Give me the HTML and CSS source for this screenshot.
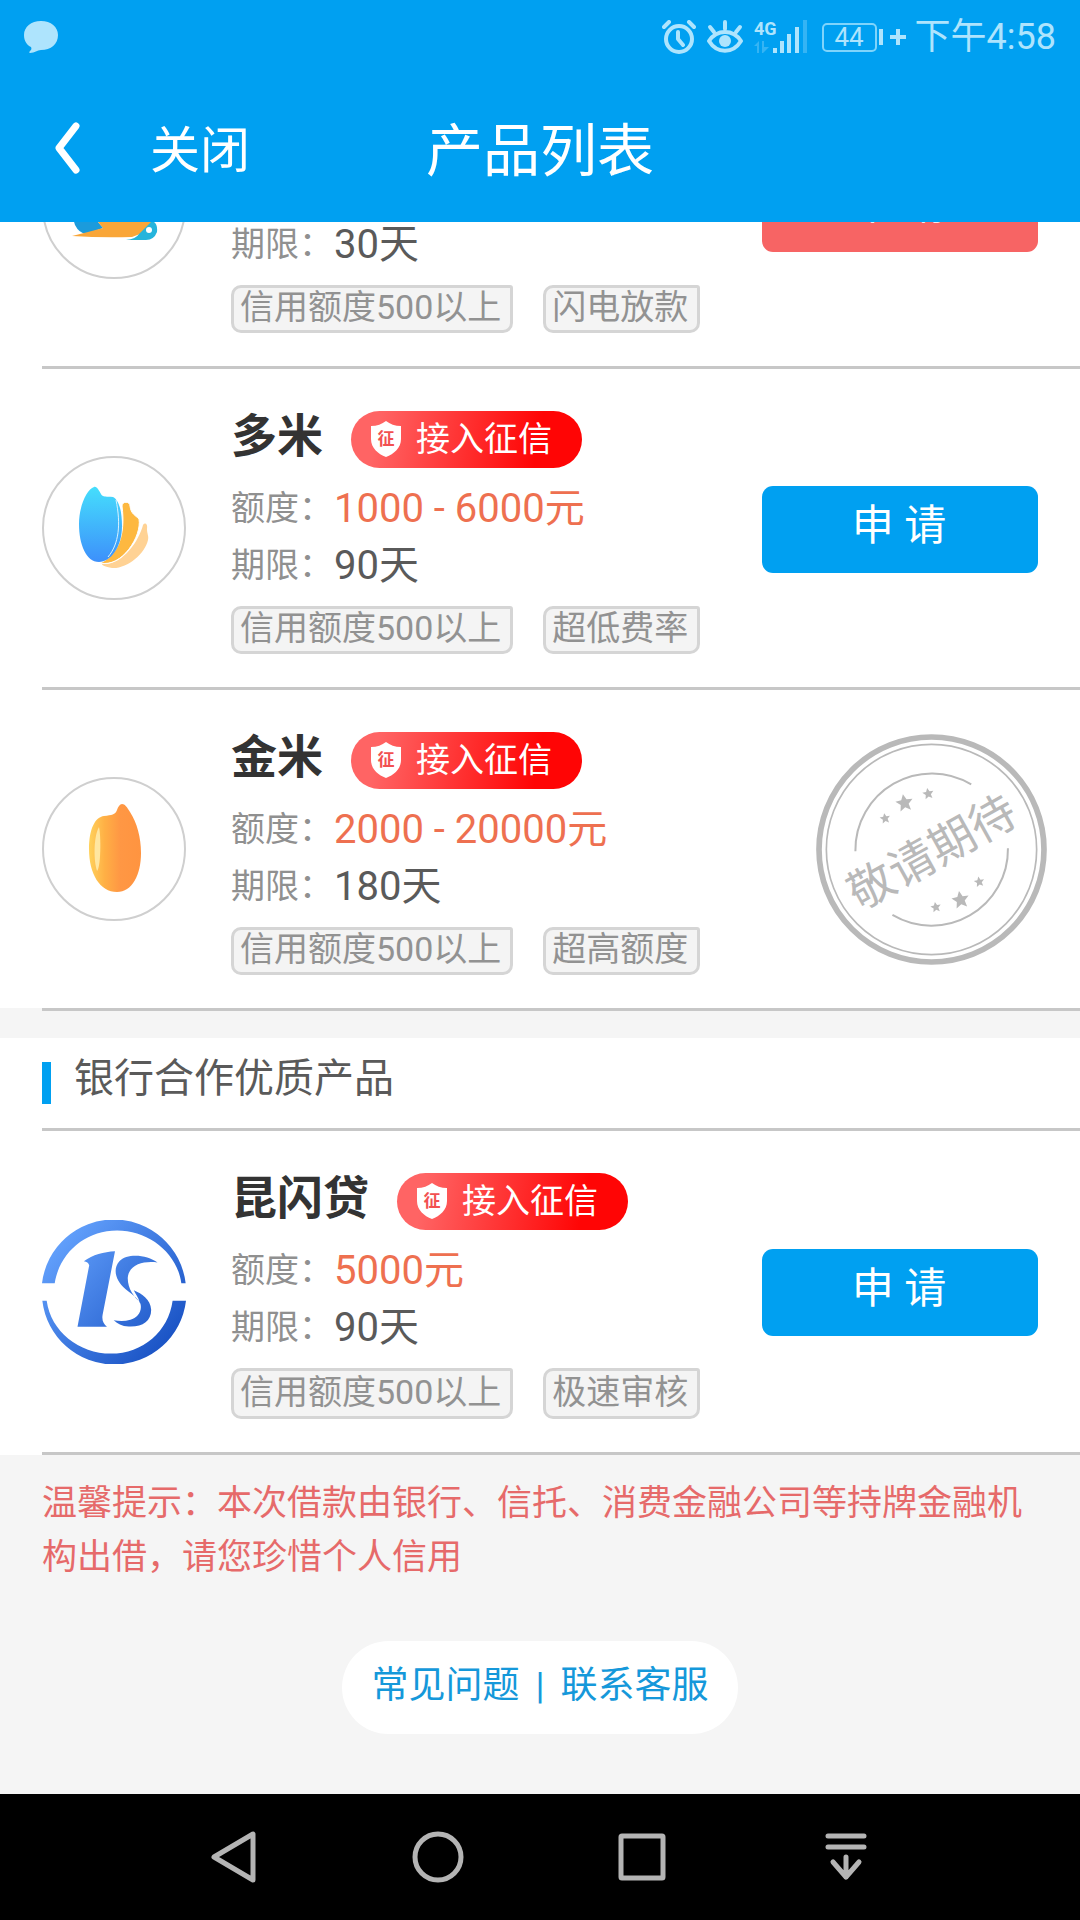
FILE: index.html
```html
<!DOCTYPE html>
<html lang="zh-CN">
<head>
<meta charset="utf-8">
<meta name="viewport" content="width=device-width, initial-scale=1">
<title>产品列表</title>
<link rel="stylesheet" href="styles.css">
</head>
<body>
<svg class="defs" aria-hidden="true">
  <defs>
    <linearGradient id="rice-blue" x1="0" y1="0" x2="0" y2="1"><stop offset="0" stop-color="#45defc"/><stop offset="1" stop-color="#3d90fb"/></linearGradient>
    <linearGradient id="rice-gold"><stop offset="0" stop-color="#ffd25c"/><stop offset=".3" stop-color="#ffb045"/><stop offset=".6" stop-color="#ff9744"/><stop offset="1" stop-color="#ff9440"/></linearGradient>
    <linearGradient id="bank-blue" gradientUnits="userSpaceOnUse" x1="110" y1="140" x2="430" y2="430"><stop offset="0" stop-color="#619ffb"/><stop offset="1" stop-color="#1c55c6"/></linearGradient>
    <symbol id="shield" viewBox="0 0 30 36">
      <path fill="#fff" d="M15 0C19 3 24 5 30 5V18C30 27 23 33 15 36C7 33 0 27 0 18V5C6 5 11 3 15 0Z"/>
      <text x="15" y="24" text-anchor="middle" class="shield-text">征</text>
    </symbol>
    <path id="star" d="M0 -27L8 -10L26 -9L12 4L16 23L0 13L-16 23L-12 4L-26 -9L-8 -10Z"/>
  </defs>
</svg>

<div class="screen">
  <header class="header">
    <div class="status">
      <svg class="status-chat" width="34" height="33" viewBox="0 0 34 33"><path d="M17 0C27 0 34 6 34 14C34 23 27 29 17 29C13 29 11 32 6 32C5 32 5 31 6 30C7 29 8 28 7 26C3 24 0 20 0 14C0 6 7 0 17 0Z"/></svg>
      <div class="status-right">
        <svg width="34" height="34" viewBox="0 0 34 34" class="line"><circle cx="17" cy="19" r="13" stroke-width="4"/><path stroke-width="4" d="M16 12V19L21 25M2 7L7 2M27 2L32 7"/></svg>
        <svg class="icon-eye line" width="36" height="34" viewBox="0 0 36 34"><path stroke-width="4" d="M2 21C10 9 26 9 34 21C26 34 10 34 2 21Z"/><circle class="solid" cx="18" cy="21" r="6"/><path stroke-width="4" d="M18 2V9M3 7L7 12M33 7L29 12"/></svg>
        <svg class="icon-signal" width="54" height="40" viewBox="0 -2 54 40"><text x="0" y="16" class="net">4G</text><path d="M19 29h4v5h-4zM26 22h4v12h-4zM33 15h4v19h-4zM41 8h4v26h-4z"/><path opacity=".3" d="M49 1h4v33h-4zM0 27L5 22V34H3V27ZM8 22H10V28H15L9 34H8Z"/></svg>
        <span class="battery">44</span>
        <svg class="icon-charge" width="28" height="18" viewBox="0 0 28 18"><path d="M0 1h4v16H0zM17 1h4v6h6v4h-6v6h-4v-6h-6V7h6z"/></svg>
        <time>下午4:58</time>
      </div>
    </div>
    <div class="titlebar">
      <div class="titlebar-left">
        <button class="plain" type="button" aria-label="返回"><svg class="chevron" width="28" height="52" viewBox="0 0 28 52"><path d="M22 4L5 26L22 48"/></svg></button>
        <button class="plain close" type="button">关闭</button>
      </div>
      <h1>产品列表</h1>
    </div>
  </header>

  <main class="content">
    <section class="list list-scrolled">
      <article class="product">
        <svg class="logo" viewBox="0 0 144 144">
          <circle class="ring" cx="72" cy="72" r="71"/>
          <path fill="#1b9bdc" d="M30 80L33 90Q37 98 44 99L61 93L56 87L58 80Z"/>
          <path fill="#f9a638" d="M30 101L46 97L61 93L56 87V80H112Q108 95 98 99L90 102Q60 103 30 101Z"/>
          <path fill="#25b4dc" d="M84 105Q94 104 97 99L110 86Q116 88 115 97Q112 105 104 105Z"/>
          <circle fill="#fff" cx="107" cy="95" r="3"/>
        </svg>
        <div class="details">
          <dl class="facts"><div><dt>期限：</dt><dd>30天</dd></div></dl>
          <ul class="tags"><li>信用额度500以上</li><li>闪电放款</li></ul>
        </div>
        <button class="apply apply-hot" type="button">申 请</button>
      </article>
      <hr class="rule">
      <article class="product">
        <svg class="logo" viewBox="0 0 144 144">
          <circle class="ring" cx="72" cy="72" r="71"/>
          <path fill="#ffd294" d="M101 69C103 66 106 68 105 73C105 78 107 80 106 84C103 98 85 113 70 112C63 111 60 109 60 108C80 110 97 85 101 69Z"/>
          <path fill="#fdb840" stroke="#fff" d="M80 50C80 45 88 45 88 50C89 58 93 59 97 63C100 80 80 112 58 107C75 100 84 80 80 50Z"/>
          <path fill="url(#rice-blue)" d="M52 31C55 30 57 35 59 38C61 42 66 40 71 41C77 44 80 55 80 70C80 92 68 106 57 106C44 106 37 88 37 68C37 50 45 33 52 31Z"/>
          <path fill="none" stroke="#d9f3ff" d="M74 44C79 68 77 88 66 101"/>
        </svg>
        <div class="details">
          <div class="heading"><h2>多米</h2><span class="badge"><svg class="shield"><use href="#shield"/></svg>接入征信</span></div>
          <dl class="facts"><div><dt>额度：</dt><dd class="amount">1000 - 6000元</dd></div><div><dt>期限：</dt><dd>90天</dd></div></dl>
          <ul class="tags"><li>信用额度500以上</li><li>超低费率</li></ul>
        </div>
        <button class="apply" type="button">申 请</button>
      </article>
      <hr class="rule">
      <article class="product">
        <svg class="logo" viewBox="0 0 144 144">
          <circle class="ring" cx="72" cy="72" r="71"/>
          <path fill="url(#rice-gold)" d="M80 27C83 27 85 30 88 35C95 46 99 60 99 76C99 98 90 115 75 115C58 115 47 97 47 72C47 52 53 40 62 39C70 38 73 38 75 33C76 30 78 27 80 27Z"/>
          <path fill="#ffe6a0" d="M57 50C52 58 51 82 55 94C59 90 59 58 57 50Z"/>
        </svg>
        <div class="details">
          <div class="heading"><h2>金米</h2><span class="badge"><svg class="shield"><use href="#shield"/></svg>接入征信</span></div>
          <dl class="facts"><div><dt>额度：</dt><dd class="amount">2000 - 20000元</dd></div><div><dt>期限：</dt><dd>180天</dd></div></dl>
          <ul class="tags"><li>信用额度500以上</li><li>超高额度</li></ul>
        </div>
        <svg class="stamp" viewBox="78 73 692 692">
          <g class="stamp-lines">
            <circle cx="424" cy="419" r="337" stroke-width="17"/>
            <circle cx="424" cy="419" r="315" stroke-width="5"/>
            <path stroke-width="6" d="M196 424A229 229 0 0 1 543 224M653 415A229 229 0 0 1 307 615"/>
          </g>
          <use href="#star" transform="translate(343 280) rotate(-10)"/>
          <use href="#star" transform="translate(285 326) rotate(-10) scale(.6)"/>
          <use href="#star" transform="translate(414 252) rotate(-10) scale(.65)"/>
          <use href="#star" transform="translate(511 570) rotate(-10)"/>
          <use href="#star" transform="translate(437 592) rotate(-10) scale(.6)"/>
          <use href="#star" transform="translate(567 516) rotate(-10) scale(.6)"/>
          <text class="stamp-text" text-anchor="middle" transform="translate(424 424) rotate(-29)" y="52">敬请期待</text>
        </svg>
      </article>
    </section>
    <hr class="rule">

    <section class="list list-partner">
      <h2 class="section-title"><span>银行合作优质产品</span></h2>
      <hr class="rule">
      <article class="product">
        <svg class="logo" viewBox="66 62 430 430">
          <g fill="url(#bank-blue)">
            <path d="M66 251A216 216 0 0 1 495 251H482C470 160 385 93 290 93C195 93 118 160 104 251Z"/>
            <path d="M496 303A216 216 0 0 1 67 303H80C92 394 177 461 272 461C367 461 444 394 456 303Z"/>
            <path d="M191 185C218 165 250 157 284 155L247 345C244 362 250 373 260 381H172L207 197Q204 186 191 185Z"/>
            <path d="M411 189C380 165 320 160 297 185C275 210 288 245 315 268C335 284 352 295 360 312C366 335 350 355 330 360C312 365 295 364 280 361C290 370 305 379 325 380C365 382 392 365 392 330C390 300 365 282 340 272C346 285 354 294 357 306C342 292 322 268 322 235C325 195 370 183 411 189Z"/>
          </g>
        </svg>
        <div class="details">
          <div class="heading"><h2>昆闪贷</h2><span class="badge"><svg class="shield"><use href="#shield"/></svg>接入征信</span></div>
          <dl class="facts"><div><dt>额度：</dt><dd class="amount">5000元</dd></div><div><dt>期限：</dt><dd>90天</dd></div></dl>
          <ul class="tags"><li>信用额度500以上</li><li>极速审核</li></ul>
        </div>
        <button class="apply" type="button">申 请</button>
      </article>
      <hr class="rule">
    </section>

    <p class="notice">温馨提示：本次借款由银行、信托、消费金融公司等持牌金融机构出借，请您珍惜个人信用</p>
    <nav class="help"><a href="#faq">常见问题</a><span>|</span><a href="#service">联系客服</a></nav>
  </main>

  <nav class="sysbar">
    <button class="plain" type="button" aria-label="返回"><svg viewBox="0 0 60 60"><path d="M49 7V53L10 30Z"/></svg></button>
    <button class="plain" type="button" aria-label="主屏幕"><svg viewBox="0 0 60 60"><circle cx="30" cy="30" r="23"/></svg></button>
    <button class="plain" type="button" aria-label="最近任务"><svg viewBox="0 0 60 60"><rect x="9" y="9" width="42" height="42" rx="1"/></svg></button>
    <button class="plain" type="button" aria-label="下拉通知"><svg viewBox="0 0 60 60"><path d="M12 9H48M12 20H48M30 30V50M17 35L30 50L43 35"/></svg></button>
  </nav>
</div>
</body>
</html>
```
FILE: styles.css
```css
* { box-sizing: border-box; }

body {
  margin: 0;
  background: #f5f5f5;
  font-family: Roboto, "Noto Sans CJK SC", sans-serif;
  font-size: 34px;
  color: #5a5a5a;
}

h1, h2, p, ul, dl, dd { margin: 0; }
svg { display: block; flex: none; }
.defs { position: absolute; width: 0; height: 0; }

.plain {
  padding: 0;
  border: 0;
  background: none;
  color: inherit;
  font: inherit;
}

.screen {
  display: flex;
  flex-direction: column;
  min-height: 100vh;
}

/* Header */
.header {
  background: #00a0f1;
  color: #fff;
}

.status {
  display: flex;
  justify-content: space-between;
  align-items: center;
  height: 74px;
  padding: 0 24px;
  color: #aee4fd;
  fill: #aee4fd;
}

.status-right {
  display: flex;
  align-items: center;
  font-size: 36px;
  line-height: 42px;
}

.line { fill: none; stroke: #aee4fd; stroke-linecap: round; stroke-linejoin: round; }
.solid { fill: #aee4fd; stroke: none; }
.icon-eye { margin-left: 11px; }
.icon-signal { margin-left: 11px; overflow: visible; }
.net { font-size: 18px; font-weight: 700; }

.battery {
  width: 55px;
  margin-left: 14px;
  border: 2px solid #7fd4fb;
  border-radius: 5px;
  font-size: 26px;
  line-height: 25px;
  text-align: center;
}

.icon-charge { margin: 0 8px 0 2px; }

.titlebar {
  display: grid;
  grid-template-columns: 1fr auto 1fr;
  align-items: center;
  height: 148px;
  padding: 0 54px;
}

.titlebar-left { display: flex; align-items: center; gap: 68px; }
.chevron { fill: none; stroke: #fff; stroke-width: 7; stroke-linecap: round; stroke-linejoin: round; }
.close { padding-top: 6px; font-size: 50px; line-height: 60px; }

h1 {
  padding-top: 8px;
  font-size: 57px;
  line-height: 64px;
  font-weight: 400;
}

/* Product list */
.content { flex: 1; overflow: hidden; }
.list { background: #fff; }
.list-scrolled { margin-top: -174px; }
.list-partner { margin-top: 27px; }

.rule {
  height: 3px;
  margin: 0 0 0 42px;
  border: 0;
  background: #c7c7c7;
}

.product {
  display: flex;
  align-items: center;
  padding: 0 42px;
}

.logo { width: 144px; height: 144px; margin-right: 45px; }
.ring { fill: #fff; stroke: #cfcfcf; stroke-width: 2; }

.details {
  display: flex;
  flex: 1;
  flex-direction: column;
  justify-content: flex-end;
  min-height: 318px;
  padding: 42px 0 33px;
}

.heading { display: flex; align-items: center; gap: 28px; }

.heading h2 {
  padding-bottom: 8px;
  font-size: 46px;
  line-height: 48px;
  color: #333;
}

.badge {
  display: flex;
  align-items: center;
  gap: 15px;
  height: 57px;
  padding: 0 30px 2px 20px;
  border-radius: 29px;
  background: linear-gradient(100deg, #ff6464 12%, #ff0505 80%);
  color: #fff;
  line-height: 50px;
}

.shield { width: 30px; height: 36px; }
.shield-text { font-size: 17px; font-weight: 700; fill: #f25050; }

.facts { margin: 12px 0; line-height: 57px; }
.facts div { display: flex; gap: 1px; }
.facts dt { color: #909090; }
.facts dd { font-size: 40px; }
.facts .amount { color: #ee7050; }

.tags {
  display: flex;
  gap: 30px;
  padding: 0;
  list-style: none;
}

.tags li {
  height: 48px;
  padding: 0 9px 0 6px;
  border: 3px solid #d5d5d5;
  border-radius: 10px 3px 10px 10px;
  background: #f4f4f4;
  color: #929292;
  line-height: 38px;
  white-space: nowrap;
}

.list-partner .tags li { height: 51px; line-height: 43px; }

.apply {
  width: 276px;
  height: 87px;
  margin-top: 2px;
  padding: 0 2px 16px 0;
  border: 0;
  border-radius: 11px;
  background: #00a0f1;
  color: #fff;
  font: inherit;
  font-size: 42px;
}

.apply-hot { background: #f76464; }

.stamp { width: 231px; height: 231px; margin-right: -9px; fill: #b9b9b9; }
.stamp-lines { fill: none; stroke: #b9b9b9; }
.stamp-text { font-size: 138px; }

.section-title {
  display: flex;
  align-items: center;
  gap: 23px;
  height: 90px;
  padding: 0 42px;
  font-size: 40px;
  font-weight: 400;
  line-height: 42px;
}

.section-title span { padding-bottom: 8px; }

.section-title::before {
  content: "";
  width: 9px;
  height: 42px;
  background: #00a0f1;
}

/* Footer */
.notice {
  padding: 22px 42px 0;
  color: #e66a6a;
  font-size: 35px;
  line-height: 54px;
}

.help {
  display: flex;
  justify-content: center;
  gap: 16px;
  width: 396px;
  height: 93px;
  margin: 56px auto 60px;
  border-radius: 47px;
  background: #fff;
  color: #1598da;
  font-size: 37px;
  line-height: 89px;
}

.help a { color: inherit; text-decoration: none; }

.sysbar {
  display: flex;
  justify-content: center;
  align-items: center;
  gap: 144px;
  height: 126px;
  background: #000;
}

.sysbar svg {
  width: 60px;
  height: 60px;
  fill: none;
  stroke: #b4b4b4;
  stroke-width: 5;
  stroke-linecap: round;
  stroke-linejoin: round;
}
```
